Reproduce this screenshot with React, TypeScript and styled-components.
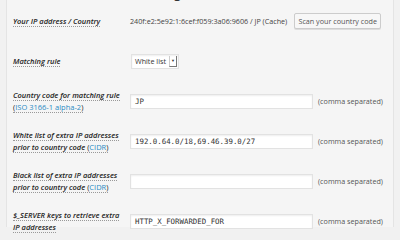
import styled, {createGlobalStyle} from 'styled-components'

const GlobalStyle = createGlobalStyle`
    html, body {
        margin: 0;
        padding: 0;
        background: #f1f1f1;
        font-family: "Open Sans", "Liberation Sans", sans-serif;
        color: #444;
    }
`;

const Page = styled.div`
    width: 400px;
    height: 240px;
    overflow: hidden;
    box-sizing: border-box;
    padding: 0 6px;
`;

const Panel = styled.div`
    height: 100%;
    background: #f5f5f5;
    border-left: 1px solid #e4e4e4;
    border-right: 1px solid #e4e4e4;
    box-sizing: border-box;
    padding: 0 6px;
`;

const Heading = styled.h3`
    margin: -13px 0 0 0;
    height: 14px;
    font-size: 12px;
    line-height: 14px;
    font-weight: 600;
    color: #333;
    padding-left: 40px;
    white-space: nowrap;
`;

const Form = styled.div`
    display: flex;
    flex-direction: column;
`;

const Row = styled.div`
    display: grid;
    grid-template-columns: 117px 1fr;
    align-items: center;
    height: 40px;
`;

const Label = styled.div`
    font-size: 7.5px;
    line-height: 12px;
    font-style: italic;
    font-weight: 600;
    color: #222;
    white-space: nowrap;
`;

const Dotted = styled.span`
    border-bottom: 1px dotted #999;
`;

const Link = styled.a`
    color: #2a8bc4;
    text-decoration: none;
    font-style: normal;
    font-weight: 400;
`;

const Paren = styled.span`
    font-style: normal;
    font-weight: 400;
`;

const Field = styled.div`
    display: flex;
    align-items: center;
    gap: 5px;
    font-size: 7.2px;
    color: #444;
    white-space: nowrap;
`;

const Button = styled.button`
    margin-left: 2px;
    margin-top: -1px;
    height: 16px;
    width: 87px;
    padding: 0;
    font-family: "Open Sans", "Liberation Sans", sans-serif;
    font-size: 7.2px;
    color: #555;
    background: #f7f7f7;
    border: 1px solid #ccc;
    border-radius: 2px;
    box-shadow: 0 1px 0 #ddd;
    white-space: nowrap;
`;

const Select = styled.div`
    display: flex;
    align-items: center;
    height: 15px;
    box-sizing: border-box;
    margin-left: 1px;
    padding-left: 3px;
    background: #fff;
    border: 1px solid #e2e2e2;
    box-shadow: inset 0 1px 2px rgba(0, 0, 0, 0.07);
    font-size: 7.2px;
    color: #333;
`;

const Arrow = styled.span`
    display: flex;
    align-items: center;
    justify-content: center;
    width: 6px;
    height: 10px;
    margin: 0 1px 0 3px;
    border-left: 1px solid #ccc;
    border-right: 1px solid #777;
    border-bottom: 1px solid #777;
    font-size: 4px;
    color: #333;
`;

const Input = styled.div<{ $mono?: boolean }>`
    width: 183px;
    height: 15px;
    box-sizing: border-box;
    display: flex;
    align-items: center;
    padding-left: 4px;
    background: #fff;
    border: 1px solid #e2e2e2;
    box-shadow: inset 0 1px 2px rgba(0, 0, 0, 0.07);
    font-family: ${props => props.$mono ? '"DejaVu Sans Mono", "Liberation Mono", monospace' : '"Open Sans", sans-serif'};
    font-size: 7.4px;
    color: #333;
`;

const Hint = styled.span`
    font-size: 7.2px;
    color: #555;
`;

export default function App() {
    return (
        <Page>
            <GlobalStyle/>
            <Panel>
                <Heading>Validation rule settings</Heading>
                <Form>
                    <Row>
                        <Label><Dotted>Your IP address / Country</Dotted></Label>
                        <Field>
                            240f:e2:5e92:1:6cef:f059:3a06:9606 / JP (Cache)
                            <Button>Scan your country code</Button>
                        </Field>
                    </Row>
                    <Row>
                        <Label><Dotted>Matching rule</Dotted></Label>
                        <Field>
                            <Select>White list<Arrow>▼</Arrow></Select>
                        </Field>
                    </Row>
                    <Row>
                        <Label>
                            <Dotted>Country code for matching rule</Dotted><br/>
                            <Dotted><Paren>(</Paren><Link>ISO 3166-1 alpha-2</Link><Paren>)</Paren></Dotted>
                        </Label>
                        <Field>
                            <Input $mono>JP</Input>
                            <Hint>(comma separated)</Hint>
                        </Field>
                    </Row>
                    <Row>
                        <Label>
                            <Dotted>White list of extra IP addresses</Dotted><br/>
                            <Dotted>prior to country code <Paren>(</Paren><Link>CIDR</Link><Paren>)</Paren></Dotted>
                        </Label>
                        <Field>
                            <Input $mono>192.0.64.0/18,69.46.39.0/27</Input>
                            <Hint>(comma separated)</Hint>
                        </Field>
                    </Row>
                    <Row>
                        <Label>
                            <Dotted>Black list of extra IP addresses</Dotted><br/>
                            <Dotted>prior to country code <Paren>(</Paren><Link>CIDR</Link><Paren>)</Paren></Dotted>
                        </Label>
                        <Field>
                            <Input $mono></Input>
                            <Hint>(comma separated)</Hint>
                        </Field>
                    </Row>
                    <Row>
                        <Label>
                            <Dotted>$_SERVER keys to retrieve extra</Dotted><br/>
                            <Dotted>IP addresses</Dotted>
                        </Label>
                        <Field>
                            <Input $mono>HTTP_X_FORWARDED_FOR</Input>
                            <Hint>(comma separated)</Hint>
                        </Field>
                    </Row>
                </Form>
            </Panel>
        </Page>
    )
}
